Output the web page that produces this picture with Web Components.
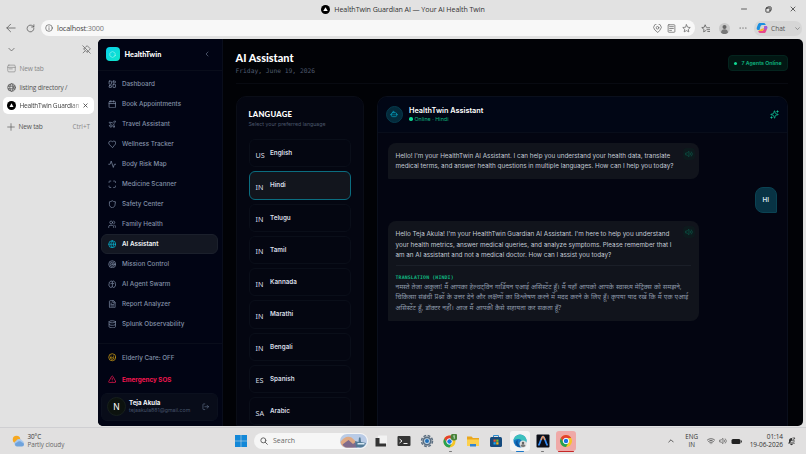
<!DOCTYPE html>
<html lang="en">
<head>
<meta charset="utf-8">
<title>HealthTwin Guardian AI</title>
<style>
  html, body { margin: 0; height: 100%; overflow: hidden; }
  body { font-family: "Inter", "Liberation Sans", sans-serif; }
</style>
</head>
<body>
<desktop-screen></desktop-screen>

<script>
// Base class: clones the markup from render() into an open shadow root
class BaseElement extends HTMLElement {
  connectedCallback() {
    if (this.shadowRoot) return;
    const template = document.createElement('template');
    template.innerHTML = this.render();
    this.attachShadow({ mode: 'open' });
    this.shadowRoot.appendChild(template.content.cloneNode(true));
  }
  render() { return '<slot></slot>'; }
}

const ICONS = {
  dashboard: '<rect x="3" y="3" width="7" height="9" rx="1"/><rect x="14" y="3" width="7" height="5" rx="1"/><rect x="14" y="12" width="7" height="9" rx="1"/><rect x="3" y="16" width="7" height="5" rx="1"/>',
  calendar: '<path d="M8 2v4M16 2v4M3 10h18"/><rect x="3" y="4" width="18" height="18" rx="2"/>',
  plane: '<path d="M17.8 19.2 16 11l3.5-3.5C21 6 21.5 4 21 3c-1-.5-3 0-4.500 1.500L13 8 4.800 6.200c-.5-.1-.9.1-1.100.5l-.3.5c-.2.5-.1 1 .3 1.300L9 12l-2 3H4l-1 1 3 2 2 3 1-1v-3l3-2 3.500 5.300c.3.4.8.5 1.300.3l.5-.2c.4-.3.6-.7.5-1.200z"/>',
  heart: '<path d="M19 14c1.500-1.500 3-3.200 3-5.500A5.500 5.500 0 0 0 16.500 3c-1.800 0-3 .5-4.500 2-1.500-1.500-2.700-2-4.500-2A5.500 5.500 0 0 0 2 8.500c0 2.300 1.500 4 3 5.500l7 7z"/>',
  activity: '<path d="M22 12h-4l-3 9L9 3l-3 9H2"/>',
  scan: '<path d="M3 7V5a2 2 0 0 1 2-2h3M16 3h3a2 2 0 0 1 2 2v2M21 17v2a2 2 0 0 1-2 2h-3M8 21H5a2 2 0 0 1-2-2v-2"/>',
  shield: '<path d="M20 13c0 5-3.500 7.500-8 9-4.500-1.500-8-4-8-9V5c3 0 5.500-1 8-3 2.500 2 5 3 8 3z"/>',
  users: '<path d="M16 21v-2a4 4 0 0 0-4-4H6a4 4 0 0 0-4 4v2M22 21v-2a4 4 0 0 0-3-3.900M16 3.100a4 4 0 0 1 0 7.800"/><circle cx="9" cy="7" r="4"/>',
  globe: '<circle cx="12" cy="12" r="10"/><path d="M12 2a14.500 14.500 0 0 0 0 20 14.500 14.500 0 0 0 0-20M2 12h20"/>',
  web: '<circle cx="12" cy="12" r="10"/><ellipse cx="12" cy="12" rx="4.500" ry="10"/><path d="M3 8.500h18M3 15.500h18"/>',
  target: '<circle cx="12" cy="12" r="10"/><circle cx="12" cy="12" r="6"/><circle cx="12" cy="12" r="2"/>',
  brain: '<path d="M12 4.500a3 3 0 0 0-5.800.8A4 4 0 0 0 3.500 11a4 4 0 0 0 .7 6.200A4 4 0 0 0 12 18.500zM12 4.500a3 3 0 0 1 5.800.8 4 4 0 0 1 2.700 5.700 4 4 0 0 1-.7 6.200A4 4 0 0 1 12 18.500M8 10.500c2 0 3-.8 4-2.500 1 1.700 2 2.500 4 2.500"/>',
  file: '<path d="M15 2H6a2 2 0 0 0-2 2v16a2 2 0 0 0 2 2h12a2 2 0 0 0 2-2V7zM14 2v6h6M8 9h2M8 13h8M8 17h8"/>',
  database: '<ellipse cx="12" cy="5" rx="9" ry="3"/><path d="M3 5v14c0 1.700 4 3 9 3s9-1.300 9-3V5M3 12c0 1.700 4 3 9 3s9-1.300 9-3"/>',
  smile: '<circle cx="12" cy="12" r="10"/><path d="M7 13.500h10c-.5 3-2.500 4.500-5 4.500s-4.500-1.500-5-4.500zM8 9h1M15 9h1"/>',
  alert: '<path d="m21.700 18-8-14a2 2 0 0 0-3.400 0l-8 14A2 2 0 0 0 4 21h16a2 2 0 0 0 1.700-3zM12 9v4M12 17v.1"/>',
  logout: '<path d="M9 21H5a2 2 0 0 1-2-2V5a2 2 0 0 1 2-2h4M16 17l5-5-5-5M21 12H9"/>',
  left: '<path d="m15 18-6-6 6-6"/>',
  down: '<path d="m3 8 9 9 9-9"/>',
  up: '<path d="m3 16 9-9 9 9"/>',
  hexagon: '<path d="M21 16V8a2 2 0 0 0-1-1.700l-7-4a2 2 0 0 0-2 0l-7 4A2 2 0 0 0 3 8v8a2 2 0 0 0 1 1.700l7 4a2 2 0 0 0 2 0l7-4a2 2 0 0 0 1-1.700z"/>',
  bot: '<path d="M12 8V4H9"/><rect x="4" y="8" width="16" height="12" rx="4"/><path d="M1 14h3M20 14h3M15 13v2M9 13v2"/>',
  sparkles: '<path d="M9.900 15.500A2 2 0 0 0 8.500 14l-6-1.600a.5.5 0 0 1 0-1L8.500 10A2 2 0 0 0 9.900 8.500l1.600-6a.5.5 0 0 1 1 0L14 8.500A2 2 0 0 0 15.500 10l6 1.500a.5.5 0 0 1 0 1l-6 1.500a2 2 0 0 0-1.500 1.500l-1.500 6a.5.5 0 0 1-1 0zM20 2v4M22 4h-4M4 18v4M6 20H2"/>',
  volume: '<path d="M11 4.700 6.500 9H2v6h4.500l4.500 4.300zM16 9a5 5 0 0 1 0 6M19.400 5.600a9 9 0 0 1 0 12.800"/>',
  back: '<path d="M22 12H2M11 3l-9 9 9 9"/>',
  reload: '<path d="M21 12a9 9 0 1 1-3-6.700L21 8M21 2v6h-6"/>',
  info: '<circle cx="12" cy="12" r="10"/><path d="M12 11v6M12 7v.1"/>',
  unpin: '<path d="M2 2l20 20M10 5l4-3 8 8-3 4M8 8l-4 2 10 10 2-4M8 16l-5 5"/>',
  tab: '<rect x="2" y="3" width="20" height="18" rx="3"/><path d="M2 9h20M6 13h8"/>',
  close: '<path d="M4 4l16 16M20 4 4 20"/>',
  plus: '<path d="M12 2v20M2 12h20"/>',
  minus: '<path d="M2 12h20"/>',
  restore: '<rect x="3" y="7" width="14" height="14" rx="2"/><path d="M8 7V5a2 2 0 0 1 2-2h9a2 2 0 0 1 2 2v9a2 2 0 0 1-2 2h-2"/>',
  pin: '<path d="M19 16a10 10 0 1 0-14 0l7 6z"/><circle cx="12" cy="10" r="3.500"/>',
  reader: '<rect x="3" y="2" width="18" height="20" rx="2"/><path d="M7 7h10M7 12h10M7 17h5"/>',
  star: '<path d="m12 2 3 6.500 7 .9-5.200 4.800L18.200 21 12 17.600 5.800 21l1.400-6.800L2 9.400l7-.9z"/>',
  favorites: '<path d="M13 17.500 7 21l1-6.500L2 9.500l6.500-.9L11 2l3 6.500M16 10h7M16 15h7M18 20h5"/>',
  dots: '<path d="M3 12h1M11.500 12h1M20 12h1"/>',
  search: '<circle cx="10" cy="10" r="7.500"/><path d="m16 16 6 6"/>',
  wifi: '<path d="M1 9a16 16 0 0 1 22 0M4.500 13a11 11 0 0 1 15 0M8 16.500a6 6 0 0 1 8 0M12 20v.2"/>'
};

class UiIcon extends BaseElement {
  render() {
    const size = this.getAttribute('size') || 8;
    const weight = this.getAttribute('weight') || 2;
    return `
      <style>
        :host { display: inline-flex; flex: none; width: ${size}px; height: ${size}px; }
        svg { width: 100%; height: 100%; fill: none; stroke: currentColor; stroke-width: ${weight};
              stroke-linecap: round; stroke-linejoin: round; }
      </style>
      <svg viewBox="0 0 24 24">${ICONS[this.getAttribute('name')]}</svg>`;
  }
}

class TitleBar extends BaseElement {
  render() {
    return `
      <style>
        :host { display: grid; grid-template-columns: 1fr auto 1fr; align-items: center; height: 18px;
                font: 7.1px "Open Sans", sans-serif; letter-spacing: -.08px; color: #333; }
        .title { display: flex; align-items: center; gap: 4px; grid-column: 2; white-space: nowrap; }
        .title svg { width: 9px; height: 9px; }
        .buttons { display: flex; justify-content: flex-end; align-items: center; gap: 18px; padding-right: 10px; }
      </style>
      <div class="title">
        <svg viewBox="0 0 18 18"><circle cx="9" cy="9" r="9" fill="#000"/><path d="M9 4.500 13.500 12h-9z" fill="#fff"/></svg>
        <span>HealthTwin Guardian AI — Your AI Health Twin</span>
      </div>
      <div class="buttons">
        <ui-icon name="minus" size="6" weight="3"></ui-icon>
        <ui-icon name="restore" size="7" weight="3"></ui-icon>
        <ui-icon name="close" size="6" weight="3"></ui-icon>
      </div>`;
  }
}

class AddressBar extends BaseElement {
  render() {
    return `
      <style>
        :host { display: flex; align-items: center; height: 20px; padding: 0 4px 0 6px; color: #555;
                font: 7.300px "Open Sans", sans-serif; }
        .url { display: flex; align-items: center; flex: 1; height: 16px; margin-left: 6px; padding: 0 4px 0 4px;
               border-radius: 8px; background: #f8f8f8; color: #444; }
        .url .text { flex: 1; margin-left: 4px; letter-spacing: -.18px; }
        .url .text i { font-style: normal; color: #777; }
        .tools { display: flex; gap: 5.500px; color: #666; }
        .reload { margin-left: 10px; }
        .fav { margin-left: 6px; }
        .person { width: 11px; height: 11px; margin: 0 9.500px 0 9px; }
        .chat { display: flex; align-items: center; width: 44px; height: 15px; margin-left: 7px; padding: 0 2px;
                border-radius: 7px; background: #d6d6d6; font-size: 6.600px; }
        .chat svg { width: 12px; height: 12px; margin-right: 3px; }
        .chat ui-icon { margin-left: auto; }
      </style>
      <ui-icon name="back" size="10" weight="1.8"></ui-icon>
      <ui-icon class="reload" name="reload" size="9" weight="2"></ui-icon>
      <div class="url">
        <ui-icon name="info" size="8" weight="1.8"></ui-icon>
        <span class="text">localhost<i>:3000</i></span>
        <div class="tools">
          <ui-icon name="pin" size="9" weight="2"></ui-icon>
          <ui-icon name="reader" size="9" weight="2"></ui-icon>
          <ui-icon name="star" size="9" weight="2"></ui-icon>
        </div>
      </div>
      <ui-icon class="fav" name="favorites" size="9"></ui-icon>
      <svg class="person" viewBox="0 0 22 22"><circle cx="11" cy="11" r="11" fill="#c9c9c9"/><circle cx="11" cy="8" r="4" fill="#666"/><path d="M4 19c0-9 14-9 14 0-4 4-10 4-14 0z" fill="#777"/></svg>
      <ui-icon name="dots" size="8" weight="3.2"></ui-icon>
      <div class="chat">
        <svg viewBox="0 0 24 24"><path d="M8 2h8c2 0 3 2 3.500 4H12c-2 0-3 2-4 6l-1 4H4c-3 0-3-3-2-6l2-5c1-2 2-3 4-3z" fill="#1b8fe0"/><path d="M16 22H8c-2 0-3-2-3.500-4H12c2 0 3-2 4-6l1-4h3c3 0 3 3 2 6l-2 5c-1 2-2 3-4 3z" fill="#e8488b"/><path d="M4.500 18H12c2 0 3-2 4-6l-5 2-4 2z" fill="#f7b52b"/><path d="M17 8h3c3 0 3 3 2 6l-6 1z" fill="#9b5fe0"/></svg>
        <span>Chat</span>
        <ui-icon name="down" size="5" weight="2.500"></ui-icon>
      </div>`;
  }
}

class TabStrip extends BaseElement {
  render() {
    return `
      <style>
        :host { display: block; width: 97px; font: 6.600px "Open Sans", sans-serif; letter-spacing: -.2px; color: #555; white-space: nowrap; }
        .top { display: flex; justify-content: space-between; align-items: center; height: 20px; padding: 1px 6px 0 8px; }
        .tab { display: flex; align-items: center; gap: 3.500px; height: 17px; margin: 0 3px 2px 3px; padding: 0 4px; border-radius: 5px; box-sizing: border-box; }
        .tab .keys { margin-left: auto; color: #888; letter-spacing: -.05px; font-size: 6.400px; }
        .dim { color: #888; margin-top: 1px; }
        .active { background: #fff; color: #444; padding-right: 6px; margin-top: -1px; }
        .active span { letter-spacing: -.28px; -webkit-mask: linear-gradient(90deg, #000 85%, #0006); }
        .active ui-icon { margin-left: auto; }
        svg { flex: none; width: 9px; height: 9px; }
        .new { margin-top: 4px; }
      </style>
      <div class="top">
        <ui-icon name="down" size="7" weight="2.500"></ui-icon>
        <ui-icon name="unpin" size="9" weight="1.800"></ui-icon>
      </div>
      <div class="tab dim"><ui-icon name="tab" size="9" weight="1.800"></ui-icon><span>New tab</span></div>
      <div class="tab"><ui-icon name="web" size="9" weight="2.200"></ui-icon><span>listing directory /</span></div>
      <div class="tab active">
        <svg viewBox="0 0 18 18"><circle cx="9" cy="9" r="9" fill="#000"/><path d="M9 4.500 13 12H5z" fill="#fff"/></svg>
        <span>HealthTwin Guardian</span>
        <ui-icon name="close" size="5" weight="4"></ui-icon>
      </div>
      <div class="tab new"><ui-icon name="plus" size="8" weight="2"></ui-icon><span>New tab</span><span class="keys">Ctrl+T</span></div>`;
  }
}

class NavItem extends BaseElement {
  render() {
    return `
      <style>
        :host { display: flex; align-items: center; gap: 6px; height: 20px; padding: 0 5.500px; box-sizing: border-box;
                border: 1px solid transparent; border-radius: 6px; font-size: 6.3px; font-weight: 500; color: #8391a8; white-space: nowrap; }
        :host([active]) { background: #131722; border-color: #1b202c; color: #f5f7fa; font-weight: 600; }
        :host([active]) ui-icon { color: #06b6d4; }
        :host([tone="danger"]) { color: #f4164f; font-weight: 700; }
        :host([tone="care"]) ui-icon { color: #d9a514; }
      </style>
      <ui-icon name="${this.getAttribute('icon')}" size="8.500"></ui-icon>
      <slot></slot>`;
  }
}

class SideNav extends BaseElement {
  render() {
    return `
      <style>
        :host { display: flex; flex-direction: column; width: 125px; box-sizing: border-box; background: #010414;
                border-right: 1px solid #090d1b; }
        .brand { display: flex; align-items: center; height: 31px; padding: 0 10.500px 0 8px; border-bottom: 1px solid #090d1b; }
        .logo { display: flex; align-items: center; justify-content: center; width: 14.500px; height: 14.500px;
                border-radius: 4px; background: linear-gradient(135deg, #08cfec, #10e8c8); color: #a8fbf2; }
        .brand b { flex: 1; margin-left: 4.500px; font: 900 7.300px "Lato", sans-serif; color: #fff; }
        .brand .left { color: #66738a; }
        nav { display: flex; flex-direction: column; padding: 3.500px 4px 0 3.500px; }
        .foot { display: flex; flex-direction: column; margin-top: auto; padding: 4px 4px 5px 3.500px; border-top: 1px solid #090d1b; }
        .foot nav-item + nav-item { margin-top: 2px; }
        .user { display: flex; align-items: center; height: 28.500px; margin-top: 3px; padding: 0 7px 0 5px; border-radius: 6px;
                background: #080c19; border: 1px solid #0b101e; box-sizing: border-box; color: #64748b; }
        .avatar { display: flex; align-items: center; justify-content: center; width: 19px; height: 19px; border-radius: 50%;
                  background: #0c120e; border: 1px solid #161f1c; color: #fff; font-size: 8.500px; font-weight: 400; box-sizing: border-box; }
        .who { flex: 1; margin-left: 3px; line-height: 7.500px; white-space: nowrap; }
        .who b { display: block; font-size: 6.200px; font-weight: 700; color: #f1f5f9; }
        .who span { display: block; font-size: 5.250px; color: #465369; }
      </style>
      <div class="brand">
        <div class="logo"><ui-icon name="hexagon" size="7"></ui-icon></div>
        <b>HealthTwin</b>
        <ui-icon class="left" name="left" size="8"></ui-icon>
      </div>
      <nav>
        <nav-item icon="dashboard">Dashboard</nav-item>
        <nav-item icon="calendar">Book Appointments</nav-item>
        <nav-item icon="plane">Travel Assistant</nav-item>
        <nav-item icon="heart">Wellness Tracker</nav-item>
        <nav-item icon="activity">Body Risk Map</nav-item>
        <nav-item icon="scan">Medicine Scanner</nav-item>
        <nav-item icon="shield">Safety Center</nav-item>
        <nav-item icon="users">Family Health</nav-item>
        <nav-item icon="globe" active>AI Assistant</nav-item>
        <nav-item icon="target">Mission Control</nav-item>
        <nav-item icon="brain">AI Agent Swarm</nav-item>
        <nav-item icon="file">Report Analyzer</nav-item>
        <nav-item icon="database">Splunk Observability</nav-item>
      </nav>
      <div class="foot">
        <nav-item icon="smile" tone="care">Elderly Care: OFF</nav-item>
        <nav-item icon="alert" tone="danger">Emergency SOS</nav-item>
        <div class="user">
          <div class="avatar">N</div>
          <div class="who"><b>Teja Akula</b><span>tejaakula881@gmail.com</span></div>
          <ui-icon name="logout" size="7.500"></ui-icon>
        </div>
      </div>`;
  }
}

class PageHeader extends BaseElement {
  render() {
    return `
      <style>
        :host { display: flex; align-items: center; justify-content: space-between; height: 45px; padding: 6px 0 0 0; box-sizing: border-box;
                border-bottom: 1px solid #080a11; }
        h1 { margin: 0; font: 900 10.900px/14px "Lato", sans-serif; color: #fff; }
        p { margin: 0; font: 6.300px/11px "DejaVu Sans Mono", monospace; color: #505b70; }
        .pill { display: flex; align-items: center; gap: 4px; height: 15.500px; padding: 0 5.500px; margin-bottom: 1px; box-sizing: border-box; border: 1px solid #04241e;
                border-radius: 4px; background: #021713; font-size: 5.250px; font-weight: 600; color: #0fb981; white-space: nowrap; }
        .pill::before { content: ""; width: 3px; height: 3px; border-radius: 50%; background: #10d993; }
      </style>
      <div><h1>AI Assistant</h1><p>Friday, June 19, 2026</p></div>
      <div class="pill">7 Agents Online</div>`;
  }
}

class LanguageOption extends BaseElement {
  render() {
    return `
      <style>
        :host { display: flex; align-items: center; gap: 5px; height: 28.250px; flex: none; padding: 0 6px; box-sizing: border-box;
                border: 1px solid #0a0e19; border-radius: 6px; font-size: 6.300px; font-weight: 600; color: #d9dee6; }
        :host([selected]) { background: #12151d; border-color: #0b6d80; }
        .code { font: 7.200px/8px "Noto Sans", sans-serif; min-width: 9.500px; padding-top: 3px; }
      </style>
      <span class="code">${this.getAttribute('code')}</span>
      <slot></slot>`;
  }
}

class LanguagePanel extends BaseElement {
  render() {
    return `
      <style>
        :host { display: flex; flex-direction: column; gap: 4px; width: 128.500px; flex: none; padding: 12px 12px 0; box-sizing: border-box;
                border: 1px solid #0a0d17; border-radius: 10px 10px 0 0; background: #040611; overflow: hidden; }
        h2 { margin: 0; font: 900 7.700px/11px "Lato", sans-serif; letter-spacing: .25px; color: #fff; }
        p { margin: 0 0 6px; font-size: 5.250px; line-height: 9px; color: #4b566b; }
      </style>
      <div><h2>LANGUAGE</h2><p>Select your preferred language</p></div>
      <language-option code="US">English</language-option>
      <language-option code="IN" selected>Hindi</language-option>
      <language-option code="IN">Telugu</language-option>
      <language-option code="IN">Tamil</language-option>
      <language-option code="IN">Kannada</language-option>
      <language-option code="IN">Marathi</language-option>
      <language-option code="IN">Bengali</language-option>
      <language-option code="ES">Spanish</language-option>
      <language-option code="SA">Arabic</language-option>`;
  }
}

class ChatMessage extends BaseElement {
  render() {
    const own = this.hasAttribute('own');
    return `
      <style>
        :host { display: block; position: relative; align-self: flex-start; width: 311.500px; padding: 8px 8px 8px 8px; box-sizing: border-box;
                border-radius: 8px 8px 8px 1px; background: #11141c; font-size: 6.300px; line-height: 10.250px; color: #c3cad5; white-space: nowrap; }
        :host([own]) { align-self: flex-end; width: auto; border: 1px solid #0b4353; border-radius: 8px 8px 1px 8px; background: #083344;
                       padding: 7px 7px; font-weight: 600; color: #d8e7ee; }
        .speak { position: absolute; top: 5px; right: 4.500px; display: flex; align-items: center; justify-content: center;
                 width: 12px; height: 12px; border-radius: 4px; background: #0d1a1d; color: #0b5c4c; }
      </style>
      <slot></slot>
      ${own ? '' : '<div class="speak"><ui-icon name="volume" size="8"></ui-icon></div>'}`;
  }
}

class ChatTranslation extends BaseElement {
  render() {
    return `
      <style>
        :host { display: block; margin-top: 4.500px; padding-top: 6.500px; border-top: 1px solid #1b1f28; color: #8d98a9;
                font: 6.600px/10.400px "Noto Sans", "Noto Sans Devanagari", sans-serif; word-spacing: .4px; }
        .label { font: 700 4.900px/10px "DejaVu Sans Mono", monospace; letter-spacing: .12px; word-spacing: 0; color: #10b981; }
      </style>
      <div class="label">${this.getAttribute('label')}</div>
      <slot></slot>`;
  }
}

class ChatPanel extends BaseElement {
  render() {
    return `
      <style>
        :host { display: flex; flex-direction: column; flex: 1; box-sizing: border-box; border: 1px solid #0a0f1c; border-bottom: 0;
                border-radius: 10px 10px 0 0; background: #030511; overflow: hidden; }
        header { display: flex; align-items: center; height: 35.500px; padding: 0 8px; box-sizing: border-box; background: #010615;
                 border-bottom: 1px solid #080d1a; }
        .bot { display: flex; align-items: center; justify-content: center; width: 17px; height: 17px; box-sizing: border-box;
               border: 1px solid #073c4e; border-radius: 50%; background: #042a3b; color: #06a6c4; }
        .name { flex: 1; margin-left: 6.500px; }
        b { display: block; font-size: 7.300px; line-height: 9px; font-weight: 600; color: #fff; }
        .status { display: flex; align-items: center; gap: 2px; font-size: 5.400px; line-height: 8px; color: #10b981; }
        .status::before { content: ""; width: 3.500px; height: 3.500px; border-radius: 50%; background: #10d993; }
        .spark { color: #10cfa0; }
        .messages { display: flex; flex-direction: column; gap: 8px; padding: 10px 10px 0; }
      </style>
      <header>
        <div class="bot"><ui-icon name="bot" size="8"></ui-icon></div>
        <div class="name"><b>HealthTwin Assistant</b><div class="status">Online · Hindi</div></div>
        <ui-icon class="spark" name="sparkles" size="9"></ui-icon>
      </header>
      <div class="messages">
        <chat-message>Hello! I'm your HealthTwin AI Assistant. I can help you understand your health data, translate<br>medical terms, and answer health questions in multiple languages. How can I help you today?</chat-message>
        <chat-message own>HI</chat-message>
        <chat-message>Hello Teja Akula! I'm your HealthTwin Guardian AI Assistant. I'm here to help you understand<br>your health metrics, answer medical queries, and analyze symptoms. Please remember that I<br>am an AI assistant and not a medical doctor. How can I assist you today?
          <chat-translation label="TRANSLATION (HINDI)" lang="hi">नमस्ते तेजा अकुला! मैं आपका हेल्थट्विन गार्डियन एआई असिस्टेंट हूँ। मैं यहाँ आपको आपके स्वास्थ्य मेट्रिक्स को समझने,<br>चिकित्सा संबंधी प्रश्नों के उत्तर देने और लक्षणों का विश्लेषण करने में मदद करने के लिए हूँ। कृपया याद रखें कि मैं एक एआई<br>असिस्टेंट हूँ, डॉक्टर नहीं। आज मैं आपकी कैसे सहायता कर सकता हूँ?</chat-translation>
        </chat-message>
      </div>`;
  }
}

class HealthApp extends BaseElement {
  render() {
    return `
      <style>
        :host { display: flex; flex: 1; height: 387.500px; margin: .5px 3px 0 .5px; border-radius: 5px; overflow: hidden; background: #010206; }
        main { display: flex; flex-direction: column; flex: 1; min-width: 0; padding: 0 15px 0 13px; }
        .panels { display: flex; gap: 12.500px; flex: 1; min-height: 0; margin-top: 12.500px; }
      </style>
      <side-nav></side-nav>
      <main>
        <page-header></page-header>
        <div class="panels"><language-panel></language-panel><chat-panel></chat-panel></div>
      </main>`;
  }
}

class TaskBar extends BaseElement {
  render() {
    return `
      <style>
        :host { display: grid; grid-template-columns: 231px 1fr auto; align-items: center; height: 27px; box-sizing: border-box;
                border-top: 1px solid #cfcfd2; background: #e1e0e0; font: 6.300px/8.500px "Open Sans", sans-serif; color: #333; white-space: nowrap; }
        svg { display: block; }
        .weather { display: flex; align-items: center; gap: 3px; padding-left: 10.500px; letter-spacing: -.08px; }
        .weather span { color: #666; }
        .apps { display: flex; align-items: center; }
        .app { display: flex; align-items: center; justify-content: center; width: 20px; height: 20px; margin-right: 3.100px; border-radius: 3px; position: relative; }
        .app svg { width: 14px; height: 14px; }
        .search { display: flex; align-items: center; gap: 5px; width: 114px; height: 16px; margin: 0 3px 0 0; padding: 0 1px 0 6px; box-sizing: border-box;
                  border-radius: 8px; background: #f6f6f6; font-size: 7.000px; color: #666; }
        .search svg { width: 27px; height: 14px; margin-left: auto; }
        .app::after { content: ""; position: absolute; bottom: -1px; width: 3px; height: 1.200px; border-radius: 1px; background: transparent; }
        .run::after { background: #777; }
        .edge { background: #f4f4f4; }
        .edge::after { width: 8px; background: #1976c8; }
        .chrome { background: #efa9a7; }
        .chrome::after { width: 16px; height: 1.500px; background: #c62828; }
        .start { margin: 0 3px 0 0; }
        .tray { display: flex; align-items: center; padding-right: 10.500px; }
        .lang { margin: 0 8.500px 0 11px; text-align: center; }
        .status { display: flex; align-items: center; gap: 4px; color: #555; }
        .clock { margin: 0 3.500px 0 8px; font-size: 6.500px; letter-spacing: -.06px; text-align: right; }
      </style>
      <div class="weather">
        <svg width="14" height="13" viewBox="0 0 28 26"><circle cx="11" cy="9" r="7.500" fill="#f6a821"/><path d="M9 21a5 5 0 0 1 1-9 7 7 0 0 1 12-1 5.200 5.200 0 0 1 0 10z" fill="#a9c9ee"/><path d="M12 23a4 4 0 0 1 0-8 6 6 0 0 1 10 0 4 4 0 0 1 0 8z" fill="#6fa3dc"/></svg>
        <div>30°C<br><span>Partly cloudy</span></div>
      </div>
      <div class="apps">
        <div class="app start"><svg viewBox="0 0 28 28"><path fill="#1388d8" d="M2 2h11.500v11.500H2zM14.500 2H26v11.500H14.500zM2 14.500h11.500V26H2zM14.500 14.500H26V26H14.500z"/></svg></div>
        <div class="search">
          <ui-icon name="search" size="8" weight="3"></ui-icon>Search
          <svg viewBox="0 0 54 28"><rect width="54" height="28" rx="14" fill="#b9cbe6"/><path d="M1 16c6-9 14-13 22-9l9 8-5 12H14C6 27 2 22 1 16z" fill="#dfa983"/><path d="m5 21 12-9 9 8 5-4 4 11H14c-4 0-8-3-9-6z" fill="#806b8c"/><path d="M32 26 30 14l7 2 1-9h3l1 9 10 2c-2 6-7 9-11 9z" fill="#527a96"/><path d="M35 18h14v3H35z" fill="#d7e9f4"/></svg>
        </div>
        <div class="app"><svg viewBox="0 0 28 28"><rect x="8" y="3" width="18" height="17" rx="1" fill="#f2f2f2"/><path d="M3 8h8v11h13v6H3z" fill="#333"/></svg></div>
        <div class="app"><svg viewBox="0 0 28 28"><rect x="1" y="4" width="26" height="20" rx="2" fill="#353535"/><path d="m5 10 5 4-5 4M13 19h8" fill="none" stroke="#eee" stroke-width="2"/></svg></div>
        <div class="app"><svg viewBox="0 0 28 28"><circle cx="14" cy="14" r="11" fill="none" stroke="#5c6e80" stroke-width="3" stroke-dasharray="5.600 3.040"/><circle cx="14" cy="14" r="7.500" fill="#c7dded" stroke="#5c6e80" stroke-width="3.500"/><circle cx="14" cy="14" r="4" fill="#2270b8"/></svg></div>
        <div class="app run"><svg viewBox="0 0 28 28"><circle cx="13" cy="15" r="12" fill="#f6c526"/><path d="M2.600 9A12 12 0 0 1 23.400 9H13l-5 9z" fill="#e3412f"/><path d="M2.600 9A12 12 0 0 0 13 27l5-9H8z" fill="#26a052"/><circle cx="13" cy="15" r="5.500" fill="#1a73e8" stroke="#fff" stroke-width="2"/><circle cx="22" cy="6" r="7" fill="#498239"/><path d="M20.500 4.500 22.500 3v6.500" stroke="#dfe" stroke-width="1.500" fill="none"/></svg></div>
        <div class="app"><svg viewBox="0 0 28 28"><path d="M2 5h9l3 3h12v15H2z" fill="#e9a61d"/><path d="M2 11h24v13H2z" fill="#fcd04e"/><path d="M8 20h12v5H8z" fill="#3385d1"/></svg></div>
        <div class="app"><svg viewBox="0 0 28 28"><path d="M9 7V3h10v4" fill="none" stroke="#2d8ed0" stroke-width="2"/><rect x="2" y="6" width="24" height="20" rx="3" fill="#154a7d"/><path d="M9 11h4.500v4.500H9z" fill="#ee5634"/><path d="M14.500 11H19v4.500h-4.500z" fill="#7db928"/><path d="M9 16.500h4.500V21H9z" fill="#21a4e8"/><path d="M14.500 16.500H19V21h-4.500z" fill="#fbb913"/></svg></div>
        <div class="app edge"><svg viewBox="0 0 28 28"><circle cx="14" cy="14" r="13" fill="#1478c4"/><path d="M1 13C3-3 26-2 27 13c0 6-8 7-10 4 2-5-3-8-7-7-4 0-7 2-9 3z" fill="#3cc1bd"/><path d="M10 12c-3 8 4 13 12 10-5 6-15 5-17-4 0-3 2-5 5-6z" fill="#0d559d"/><circle cx="20" cy="20" r="7" fill="#ddd"/><circle cx="20" cy="18" r="2.500" fill="#666"/><path d="M15 24c1-5 9-5 10 0-3 3-7 3-10 0z" fill="#777"/></svg></div>
        <div class="app run"><svg viewBox="0 0 28 28"><rect x="1" y="1" width="26" height="26" rx="2" fill="#0b0d16"/><path d="M5 23C9 19 10 5 14 5s5 14 9 18" fill="none" stroke="#358cf4" stroke-width="3.500"/><path d="M10.500 12c1-4 2-7 3.500-7s2.500 3 3.500 7" fill="none" stroke="#ef9862" stroke-width="3"/></svg></div>
        <div class="app chrome"><svg viewBox="0 0 28 28"><circle cx="14" cy="14" r="12" fill="#f6c526"/><path d="M3.600 8A12 12 0 0 1 24.400 8H14l-5 9z" fill="#e3412f"/><path d="M3.600 8A12 12 0 0 0 14 26l5-9H9z" fill="#26a052"/><circle cx="14" cy="14" r="5.500" fill="#1a73e8" stroke="#fff" stroke-width="2"/></svg></div>
      </div>
      <div class="tray">
        <ui-icon name="up" size="6" weight="3"></ui-icon>
        <div class="lang">ENG<br>IN</div>
        <div class="status">
          <ui-icon name="wifi" size="8" weight="2.500"></ui-icon>
          <ui-icon name="volume" size="8"></ui-icon>
          <svg width="11" height="7" viewBox="0 0 22 14"><rect x="1" y="2" width="18" height="10" rx="3" fill="#222"/><path d="M20 5h2v4h-2z" fill="#444"/></svg>
        </div>
        <div class="clock">01:14<br>19-06-2026</div>
        <svg width="9" height="9" viewBox="0 0 18 18"><path d="M2 13 4 10V7c0-7 10-7 10 0v3l2 3zM6 14h6c-1 3-5 3-6 0z" fill="#333"/><path d="M10 3h6l-6 6h6" fill="none" stroke="#e1e0e0" stroke-width="3.500"/><path d="M11 2h5l-5 6h5" fill="none" stroke="#333" stroke-width="1.500"/></svg>
      </div>`;
  }
}

class DesktopScreen extends BaseElement {
  render() {
    return `
      <style>
        :host { display: flex; flex-direction: column; width: 806px; height: 454px; overflow: hidden; background: #e2e2e2; }
        .body { display: flex; flex: 1; min-height: 0; }
      </style>
      <title-bar></title-bar>
      <address-bar></address-bar>
      <div class="body"><tab-strip></tab-strip><health-app></health-app></div>
      <task-bar></task-bar>`;
  }
}

customElements.define('ui-icon', UiIcon);
customElements.define('title-bar', TitleBar);
customElements.define('address-bar', AddressBar);
customElements.define('tab-strip', TabStrip);
customElements.define('nav-item', NavItem);
customElements.define('side-nav', SideNav);
customElements.define('page-header', PageHeader);
customElements.define('language-option', LanguageOption);
customElements.define('language-panel', LanguagePanel);
customElements.define('chat-translation', ChatTranslation);
customElements.define('chat-message', ChatMessage);
customElements.define('chat-panel', ChatPanel);
customElements.define('health-app', HealthApp);
customElements.define('task-bar', TaskBar);
customElements.define('desktop-screen', DesktopScreen);
</script>
</body>
</html>
